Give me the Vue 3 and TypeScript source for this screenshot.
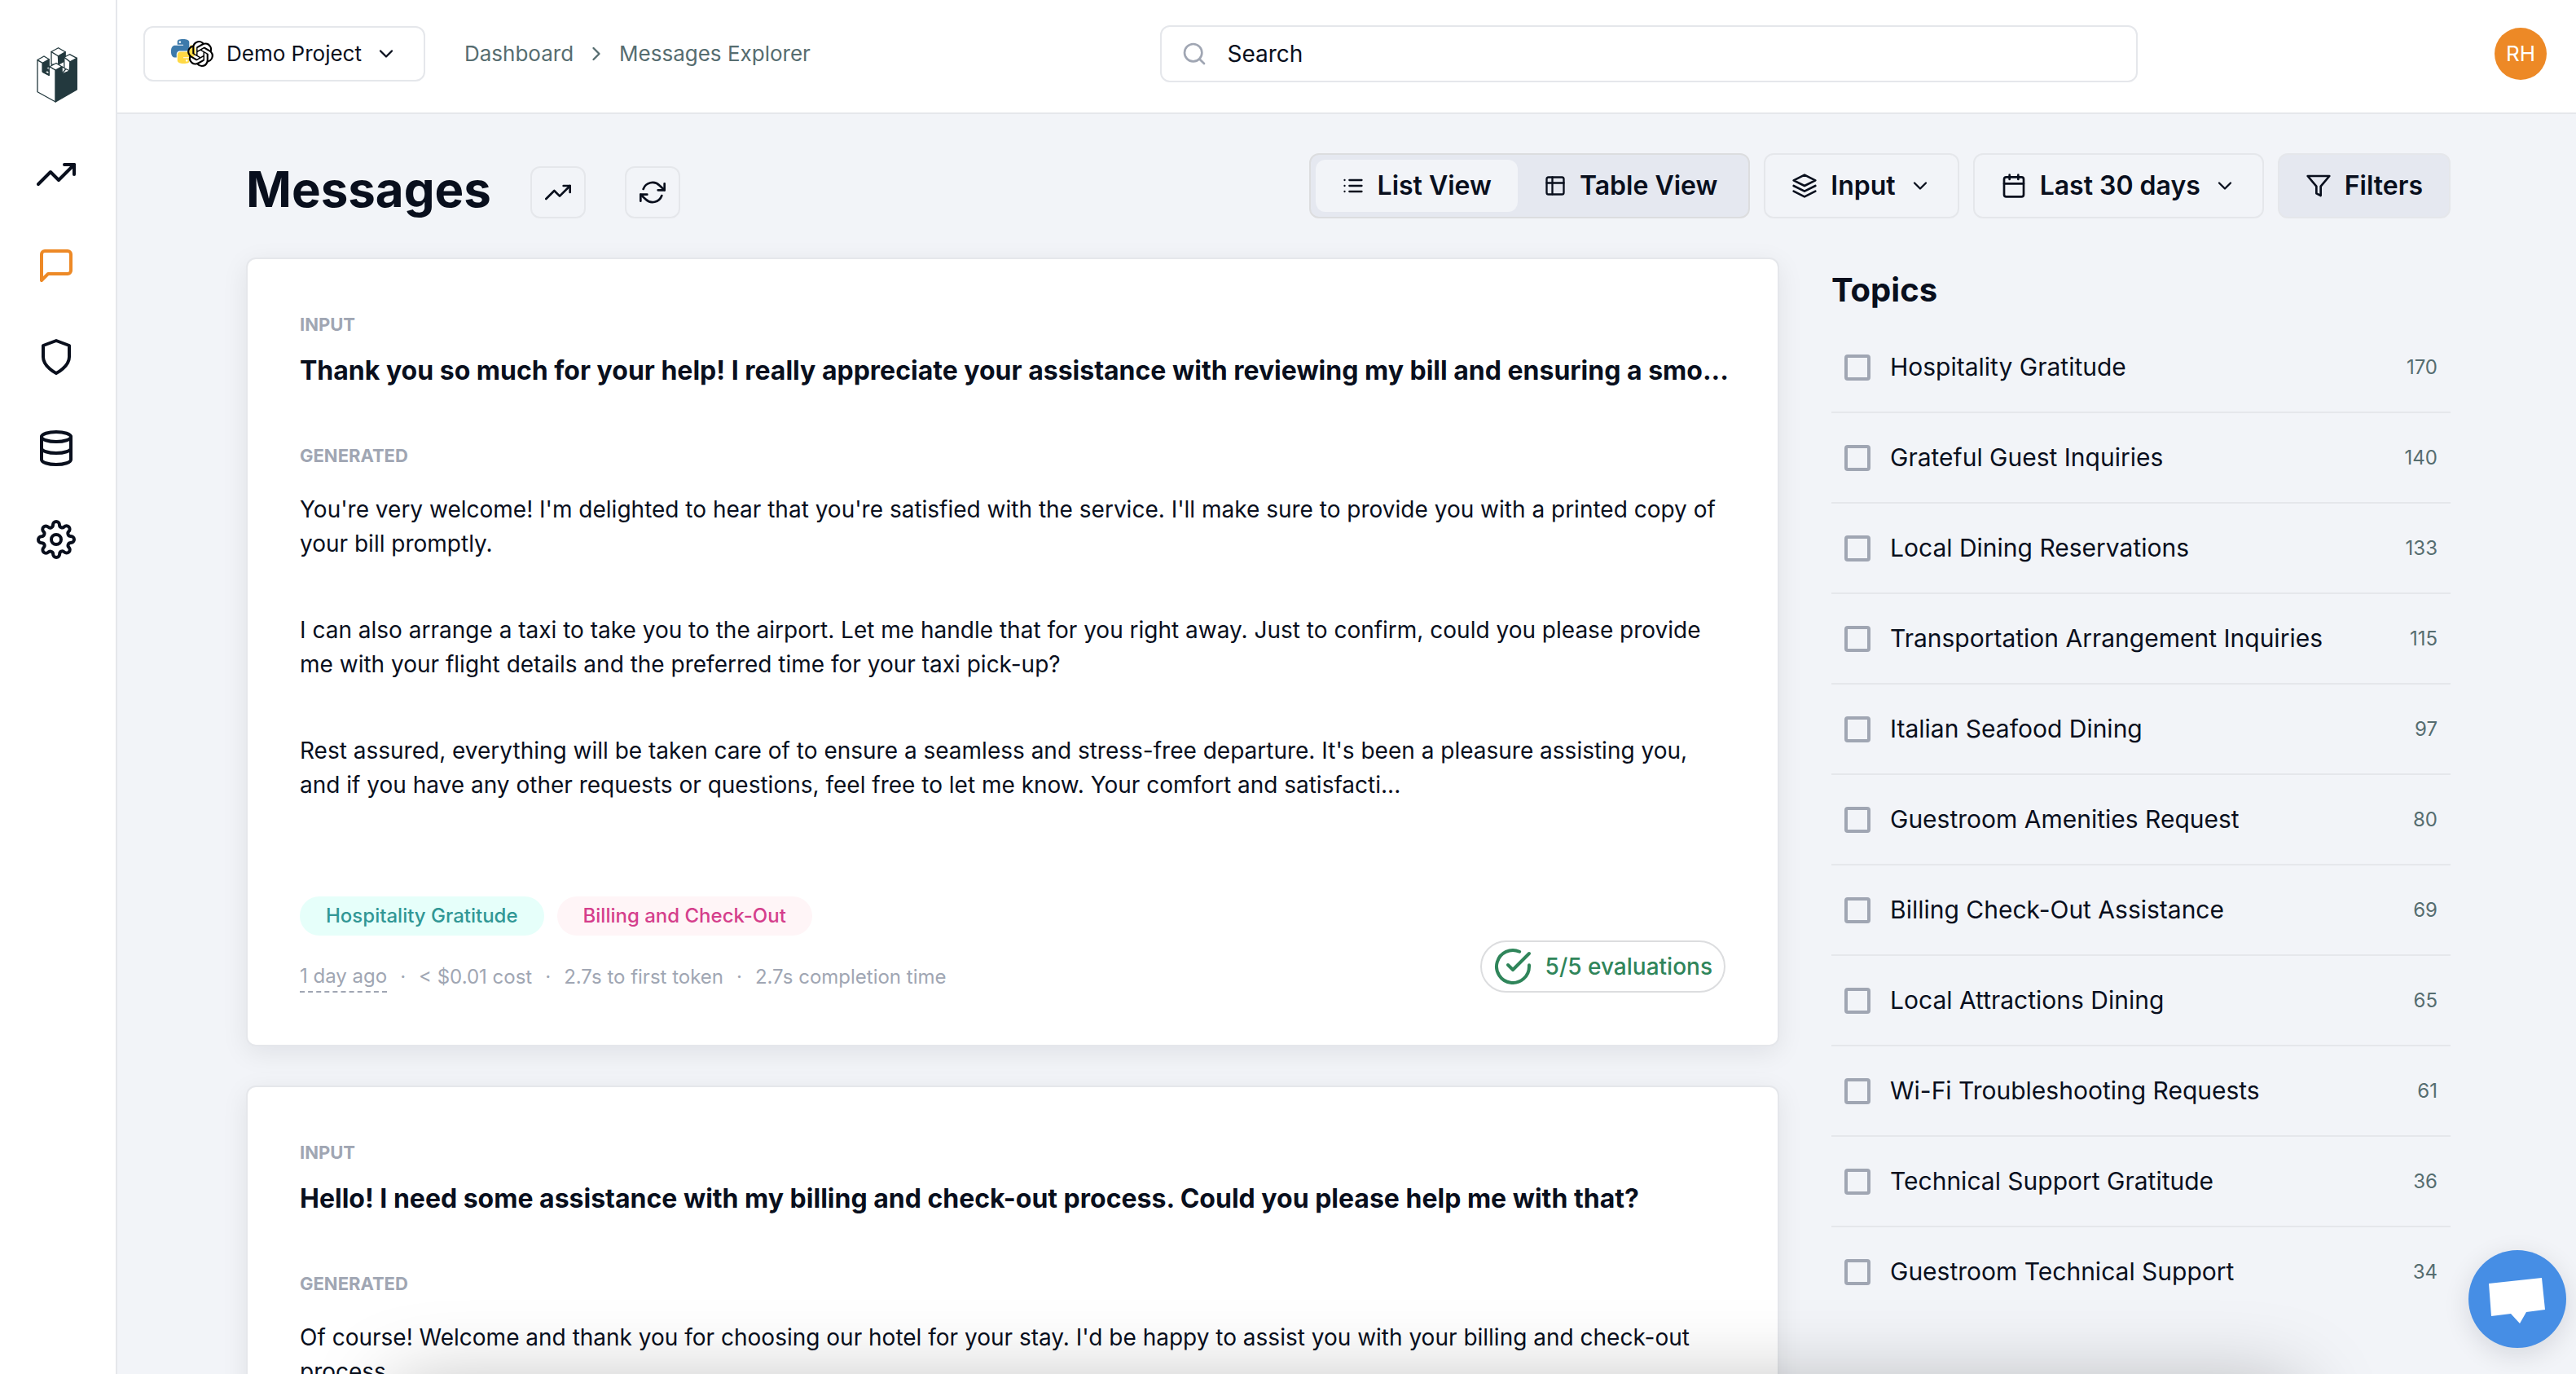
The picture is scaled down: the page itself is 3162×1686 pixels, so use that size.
<script setup lang="ts">
import { ref } from 'vue'

type Tone = 'teal' | 'pink'

interface Message {
  input: string
  paragraphs: string[]
  tags: { label: string; tone: Tone }[]
  age: string
  stats: string[]
  evaluations: string
}

const navigation = [
  { name: 'Analytics', paths: ['M23 6l-9.5 9.5-5-5L1 18', 'M17 6h6v6'] },
  { name: 'Messages', paths: ['M21 15a2 2 0 0 1-2 2H7l-4 4V5a2 2 0 0 1 2-2h14a2 2 0 0 1 2 2z'] },
  { name: 'Evaluations', paths: ['M12 22s8-4 8-10V5l-8-3-8 3v7c0 6 8 10 8 10z'] },
  {
    name: 'Datasets',
    paths: [
      'M21 5c0 1.66-4 3-9 3S3 6.66 3 5s4-3 9-3 9 1.34 9 3z',
      'M21 12c0 1.66-4 3-9 3s-9-1.34-9-3',
      'M3 5v14c0 1.66 4 3 9 3s9-1.34 9-3V5',
    ],
  },
  {
    name: 'Settings',
    paths: [
      'M15 12a3 3 0 1 1-6 0 3 3 0 0 1 6 0z',
      'M19.4 15a1.65 1.65 0 0 0 .33 1.82l.06.06a2 2 0 0 1 0 2.83 2 2 0 0 1-2.83 0l-.06-.06a1.65 1.65 0 0 0-1.82-.33 1.65 1.65 0 0 0-1 1.51V21a2 2 0 0 1-2 2 2 2 0 0 1-2-2v-.09A1.65 1.65 0 0 0 9 19.4a1.65 1.65 0 0 0-1.82.33l-.06.06a2 2 0 0 1-2.83 0 2 2 0 0 1 0-2.83l.06-.06a1.65 1.65 0 0 0 .33-1.82 1.65 1.65 0 0 0-1.51-1H3a2 2 0 0 1-2-2 2 2 0 0 1 2-2h.09A1.65 1.65 0 0 0 4.6 9a1.65 1.65 0 0 0-.33-1.82l-.06-.06a2 2 0 0 1 0-2.83 2 2 0 0 1 2.83 0l.06.06a1.65 1.65 0 0 0 1.82.33H9a1.65 1.65 0 0 0 1-1.51V3a2 2 0 0 1 2-2 2 2 0 0 1 2 2v.09a1.65 1.65 0 0 0 1 1.51 1.65 1.65 0 0 0 1.82-.33l.06-.06a2 2 0 0 1 2.83 0 2 2 0 0 1 0 2.83l-.06.06a1.65 1.65 0 0 0-.33 1.82V9a1.65 1.65 0 0 0 1.51 1H21a2 2 0 0 1 2 2 2 2 0 0 1-2 2h-.09a1.65 1.65 0 0 0-1.51 1z',
    ],
  },
]
const activePage = 'Messages'

const search = ref('')
const view = ref<'list' | 'table'>('list')
const selectedTopics = ref<string[]>([])

const messages: Message[] = [
  {
    input:
      'Thank you so much for your help! I really appreciate your assistance with reviewing my bill and ensuring a smo...',
    paragraphs: [
      "You're very welcome! I'm delighted to hear that you're satisfied with the service. I'll make sure to provide you with a printed copy of your bill promptly.",
      'I can also arrange a taxi to take you to the airport. Let me handle that for you right away. Just to confirm, could you please provide me with your flight details and the preferred time for your taxi pick-up?',
      "Rest assured, everything will be taken care of to ensure a seamless and stress-free departure. It's been a pleasure assisting you, and if you have any other requests or questions, feel free to let me know. Your comfort and satisfacti...",
    ],
    tags: [
      { label: 'Hospitality Gratitude', tone: 'teal' },
      { label: 'Billing and Check-Out', tone: 'pink' },
    ],
    age: '1 day ago',
    stats: ['< $0.01 cost', '2.7s to first token', '2.7s completion time'],
    evaluations: '5/5 evaluations',
  },
  {
    input: 'Hello! I need some assistance with my billing and check-out process. Could you please help me with that?',
    paragraphs: [
      "Of course! Welcome and thank you for choosing our hotel for your stay. I'd be happy to assist you with your billing and check-out process.",
    ],
    tags: [{ label: 'Billing and Check-Out', tone: 'pink' }],
    age: '1 day ago',
    stats: ['< $0.01 cost'],
    evaluations: '5/5 evaluations',
  },
]

const topics = [
  { name: 'Hospitality Gratitude', count: 170 },
  { name: 'Grateful Guest Inquiries', count: 140 },
  { name: 'Local Dining Reservations', count: 133 },
  { name: 'Transportation Arrangement Inquiries', count: 115 },
  { name: 'Italian Seafood Dining', count: 97 },
  { name: 'Guestroom Amenities Request', count: 80 },
  { name: 'Billing Check-Out Assistance', count: 69 },
  { name: 'Local Attractions Dining', count: 65 },
  { name: 'Wi-Fi Troubleshooting Requests', count: 61 },
  { name: 'Technical Support Gratitude', count: 36 },
  { name: 'Guestroom Technical Support', count: 34 },
]
</script>

<template>
  <div class="shell">
    <aside class="sidebar">
      <a href="#" class="logo" aria-label="Home">
        <svg viewBox="44 58 50 68" stroke="#23393e" stroke-width="1.3" stroke-linejoin="round" fill="#fff">
          <path d="M45 74V112.7L67.2 125V86L59.2 81.5V92.3L51.3 88.3V77z" />
          <path d="M62 63.5V79L71 80V68.7z" />
          <path d="M70.4 68.7L79.2 63.7V74.5L71 79z" fill="#23393e" />
          <path d="M62 63.5L70.6 58.7L79.2 63.7L70.4 68.7z" />
          <path d="M51.3 77L59.2 72.7V81L56 83.5L59.2 86.5V92.3L51.3 88z" fill="#23393e" />
          <path d="M54 88.5L57 86.5L59 88V91z" />
          <path d="M45 73.5L53 69L59.2 72.7L51.3 77.2z" />
          <path d="M74.8 81.7L80 84.5L75 90.5z" />
          <path d="M77.8 70V83.5L84.6 87L85 75.8z" />
          <path d="M67.2 86L74.8 81.7V91L84.2 87L85 75.8L93.3 71.3V110L67.2 125z" fill="#23393e" />
          <path d="M77.8 70.2L84.4 66.7L93.3 71.3L85 75.8z" />
          <path d="M60 81.8L68 77.5L74.8 81.7L67.2 86z" />
        </svg>
      </a>
      <nav class="nav" aria-label="Main">
        <a
          v-for="item in navigation"
          :key="item.name"
          href="#"
          :class="['nav-link', { active: item.name === activePage }]"
          :aria-label="item.name"
        >
          <svg class="icon icon-lg" viewBox="0 0 24 24">
            <path v-for="d in item.paths" :key="d" :d="d" />
          </svg>
        </a>
      </nav>
    </aside>

    <div class="page">
      <header class="header">
        <div class="header-start">
          <button type="button" class="project">
            <span class="project-logos">
              <svg class="python" viewBox="0 0 24 24">
                <path fill="#3d7aab" d="M14.25.18l.9.2.73.26.59.3.45.32.34.34.25.34.16.33.1.3.04.26.02.2-.01.13V8.5l-.05.63-.13.55-.21.46-.26.38-.3.31-.33.25-.35.19-.35.14-.33.1-.3.07-.26.04-.21.02H8.77l-.69.05-.59.14-.5.22-.41.27-.33.32-.27.35-.2.36-.15.37-.1.35-.07.32-.04.27-.02.21v3.06H3.17l-.21-.03-.28-.07-.32-.12-.35-.18-.36-.26-.36-.36-.35-.46-.32-.59-.28-.73-.21-.88-.14-1.05-.05-1.23.06-1.22.16-1.04.24-.87.32-.71.36-.57.4-.44.42-.33.42-.24.4-.16.36-.1.32-.05.24-.01h.16l.06.01h8.16v-.83H6.18l-.01-2.75-.02-.37.05-.34.11-.31.17-.28.25-.26.31-.23.38-.2.44-.18.51-.15.58-.12.64-.1.71-.06.77-.04.84-.02 1.27.05zm-6.3 1.98l-.23.33-.08.41.08.41.23.34.33.22.41.09.41-.09.33-.22.23-.34.08-.41-.08-.41-.23-.33-.33-.22-.41-.09-.41.09z" />
                <path fill="#ffd945" d="M21.1 6.11l.28.06.32.12.35.18.36.27.36.35.35.47.32.59.28.73.21.88.14 1.04.05 1.23-.06 1.23-.16 1.04-.24.86-.32.71-.36.57-.4.45-.42.33-.42.24-.4.16-.36.09-.32.05-.24.02-.16-.01h-8.22v.82h5.84l.01 2.76.02.36-.05.34-.11.31-.17.29-.25.25-.31.24-.38.2-.44.17-.51.15-.58.13-.64.09-.71.07-.77.04-.84.01-1.27-.04-1.07-.14-.9-.2-.73-.25-.59-.3-.45-.33-.34-.34-.25-.34-.16-.33-.1-.3-.04-.25-.02-.2.01-.13v-5.34l.05-.64.13-.54.21-.46.26-.38.3-.32.33-.24.35-.2.35-.14.33-.1.3-.06.26-.04.21-.02.13-.01h5.84l.69-.05.59-.14.5-.21.41-.28.33-.32.27-.35.2-.36.15-.36.1-.35.07-.32.04-.28.02-.21V6.07h2.09l.14.01zm-6.47 14.25l-.23.33-.08.41.08.41.23.33.33.23.41.08.41-.08.33-.23.23-.33.08-.41-.08-.41-.23-.33-.33-.23-.41-.08-.41.08z" />
              </svg>
              <svg class="openai" viewBox="0 0 24 24">
                <path d="M22.2819 9.8211a5.9847 5.9847 0 0 0-.5157-4.9108 6.0462 6.0462 0 0 0-6.5098-2.9A6.0651 6.0651 0 0 0 4.9807 4.1818a5.9847 5.9847 0 0 0-3.9977 2.9 6.0462 6.0462 0 0 0 .7427 7.0966 5.98 5.98 0 0 0 .511 4.9107 6.051 6.051 0 0 0 6.5146 2.9001A5.9847 5.9847 0 0 0 13.2599 24a6.0557 6.0557 0 0 0 5.7718-4.2058 5.9894 5.9894 0 0 0 3.9977-2.9001 6.0557 6.0557 0 0 0-.7475-7.0729zm-9.022 12.6081a4.4755 4.4755 0 0 1-2.8764-1.0408l.1419-.0804 4.7783-2.7582a.7948.7948 0 0 0 .3927-.6813v-6.7369l2.02 1.1686a.071.071 0 0 1 .038.052v5.5826a4.504 4.504 0 0 1-4.4945 4.4944zm-9.6607-4.1254a4.4708 4.4708 0 0 1-.5346-3.0137l.142.0852 4.783 2.7582a.7712.7712 0 0 0 .7806 0l5.8428-3.3685v2.3324a.0804.0804 0 0 1-.0332.0615L9.74 19.9502a4.4992 4.4992 0 0 1-6.1408-1.6464zM2.3408 7.8956a4.485 4.485 0 0 1 2.3655-1.9728V11.6a.7664.7664 0 0 0 .3879.6765l5.8144 3.3543-2.0201 1.1685a.0757.0757 0 0 1-.071 0l-4.8303-2.7865A4.504 4.504 0 0 1 2.3408 7.872zm16.5963 3.8558L13.1038 8.364 15.1192 7.2a.0757.0757 0 0 1 .071 0l4.8303 2.7913a4.4944 4.4944 0 0 1-.6765 8.1042v-5.6772a.79.79 0 0 0-.407-.667zm2.0107-3.0231l-.142-.0852-4.7735-2.7818a.7759.7759 0 0 0-.7854 0L9.409 9.2297V6.8974a.0662.0662 0 0 1 .0284-.0615l4.8303-2.7866a4.4992 4.4992 0 0 1 6.6802 4.66zM8.3065 12.863l-2.02-1.1638a.0804.0804 0 0 1-.038-.0567V6.0742a4.4992 4.4992 0 0 1 7.3757-3.4537l-.142.0805L8.704 5.459a.7948.7948 0 0 0-.3927.6813zm1.0976-2.3654l2.602-1.4998 2.6069 1.4998v2.9994l-2.5974 1.4997-2.6067-1.4997Z" />
              </svg>
            </span>
            Demo Project
            <svg class="icon icon-sm" viewBox="0 0 24 24"><path d="M6 9l6 6 6-6" /></svg>
          </button>
          <nav class="breadcrumbs" aria-label="Breadcrumb">
            <a href="#">Dashboard</a>
            <svg class="icon icon-sm" viewBox="0 0 24 24"><path d="M9 18l6-6-6-6" /></svg>
            <a href="#">Messages Explorer</a>
          </nav>
        </div>
        <label class="search">
          <svg class="icon icon-md" viewBox="0 0 24 24">
            <circle cx="11" cy="11" r="8" />
            <path d="M21 21l-4.35-4.35" />
          </svg>
          <input v-model="search" type="search" placeholder="Search" aria-label="Search" />
        </label>
        <button type="button" class="avatar">RH</button>
      </header>

      <main class="content">
        <div class="toolbar">
          <div class="title-group">
            <h1>Messages</h1>
            <button type="button" class="icon-button" aria-label="Show graph">
              <svg class="icon icon-md" viewBox="0 0 24 24">
                <path d="M23 6l-9.5 9.5-5-5L1 18" />
                <path d="M17 6h6v6" />
              </svg>
            </button>
            <button type="button" class="icon-button" aria-label="Refresh">
              <svg class="icon icon-md" viewBox="0 0 24 24">
                <path d="M23 4v6h-6M1 20v-6h6" />
                <path d="M3.51 9a9 9 0 0 1 14.85-3.36L23 10M1 14l4.64 4.36A9 9 0 0 0 20.49 15" />
              </svg>
            </button>
          </div>
          <div class="actions">
            <div class="view-switch" role="group" aria-label="View">
              <button type="button" :class="{ current: view === 'list' }" @click="view = 'list'">
                <svg class="icon icon-sm" viewBox="0 0 24 24">
                  <path d="M8 6h13M8 12h13M8 18h13M3 6h.01M3 12h.01M3 18h.01" />
                </svg>
                List View
              </button>
              <button type="button" :class="{ current: view === 'table' }" @click="view = 'table'">
                <svg class="icon icon-sm" viewBox="0 0 24 24">
                  <rect x="3" y="3" width="18" height="18" rx="2" />
                  <path d="M3 9h18M9 3v18" />
                </svg>
                Table View
              </button>
            </div>
            <button type="button" class="action">
              <svg class="icon icon-md" viewBox="0 0 24 24">
                <path d="M12 2L2 7l10 5 10-5-10-5zM2 17l10 5 10-5M2 12l10 5 10-5" />
              </svg>
              Input
              <svg class="icon icon-sm" viewBox="0 0 24 24"><path d="M6 9l6 6 6-6" /></svg>
            </button>
            <button type="button" class="action">
              <svg class="icon icon-md" viewBox="0 0 24 24">
                <rect x="3" y="4" width="18" height="18" rx="2" />
                <path d="M16 2v4M8 2v4M3 10h18" />
              </svg>
              Last 30 days
              <svg class="icon icon-sm" viewBox="0 0 24 24"><path d="M6 9l6 6 6-6" /></svg>
            </button>
            <button type="button" class="action filled">
              <svg class="icon icon-md" viewBox="0 0 24 24">
                <path d="M22 3H2l8 9.46V19l4 2v-8.54L22 3z" />
              </svg>
              Filters
            </button>
          </div>
        </div>

        <div class="columns">
          <section class="messages" aria-label="Messages">
            <article v-for="message in messages" :key="message.input" class="card">
              <div class="label">INPUT</div>
              <h2 class="input-text">{{ message.input }}</h2>
              <div class="label generated">GENERATED</div>
              <div class="generated-text">
                <p v-for="paragraph in message.paragraphs" :key="paragraph">{{ paragraph }}</p>
              </div>
              <footer class="card-footer">
                <div class="details">
                  <div class="tags">
                    <span v-for="tag in message.tags" :key="tag.label" :class="['tag', tag.tone]">{{ tag.label }}</span>
                  </div>
                  <div class="stats">
                    <span class="age">{{ message.age }}</span>
                    <template v-for="stat in message.stats" :key="stat">
                      <span>·</span>
                      <span>{{ stat }}</span>
                    </template>
                  </div>
                </div>
                <button type="button" class="evaluations">
                  <svg class="icon icon-lg" viewBox="0 0 24 24">
                    <path d="M22 11.08V12a10 10 0 1 1-5.93-9.14" />
                    <path d="M22 4L12 14.01l-3-3" />
                  </svg>
                  {{ message.evaluations }}
                </button>
              </footer>
            </article>
          </section>

          <section class="topics" aria-labelledby="topics-heading">
            <h2 id="topics-heading">Topics</h2>
            <ul>
              <li v-for="topic in topics" :key="topic.name">
                <label>
                  <input v-model="selectedTopics" type="checkbox" :value="topic.name" />
                  {{ topic.name }}
                </label>
                <span class="count">{{ topic.count }}</span>
              </li>
            </ul>
          </section>
        </div>
      </main>
    </div>

    <div class="drawer" aria-hidden="true"></div>

    <button type="button" class="chat" aria-label="Open chat">
      <svg viewBox="0 0 120 120"><path d="M25 41L90 34L94 73L71 76L63 90L52 78L28 81z" /></svg>
    </button>
  </div>
</template>

<style>
body {
  margin: 0;
  background: #f2f4f8;
}
</style>

<style scoped>
.shell,
.shell * {
  box-sizing: border-box;
}

.shell {
  display: flex;
  height: 100vh;
  overflow: hidden;
  color: #090f1d;
  font-family: Inter, 'Liberation Sans', sans-serif;
  font-size: 28px;
  line-height: 42px;
}

button,
input {
  font: inherit;
  color: inherit;
}

button {
  display: flex;
  align-items: center;
  padding: 0;
  border: 0;
  background: none;
  cursor: pointer;
  white-space: nowrap;
}

a {
  color: inherit;
  text-decoration: none;
}

h1,
h2,
p,
ul {
  margin: 0;
  padding: 0;
}

.icon {
  flex: none;
  fill: none;
  stroke: currentColor;
  stroke-width: 2;
  stroke-linecap: round;
  stroke-linejoin: round;
}

.icon-sm {
  width: 28px;
  height: 28px;
}

.icon-md {
  width: 32px;
  height: 32px;
}

.icon-lg {
  width: 48px;
  height: 48px;
}

.sidebar {
  flex: none;
  width: 144px;
  padding: 58px 45px;
  border-right: 2px solid #e5e7eb;
  background: #fff;
}

.logo,
.logo svg {
  display: block;
  width: 50px;
  height: 68px;
}

.nav {
  display: flex;
  flex-direction: column;
  gap: 64px;
  margin-top: 64px;
}

.nav-link {
  display: flex;
}

.nav-link.active {
  color: #ed8926;
}

.page {
  flex: 1;
  min-width: 0;
}

.header {
  display: flex;
  align-items: center;
  justify-content: space-between;
  height: 140px;
  padding: 0 36px 6px 32px;
  border-bottom: 2px solid #e5e7eb;
  background: #fff;
}

.header-start {
  display: flex;
  align-items: center;
  gap: 48px;
}

.project {
  gap: 16px;
  height: 68px;
  padding: 0 32px;
  border: 2px solid #e5e7eb;
  border-radius: 12px;
  font-size: 26px;
}

.project-logos {
  display: flex;
  align-items: center;
}

.python {
  width: 30px;
  height: 30px;
  margin: 0 -10px 6px 0;
}

.openai {
  width: 32px;
  height: 32px;
}

.breadcrumbs {
  display: flex;
  align-items: center;
  gap: 14px;
  color: #566d70;
  font-size: 26px;
}

.search {
  display: flex;
  align-items: center;
  gap: 24px;
  flex: 0 1 1200px;
  height: 70px;
  margin-right: 8px;
  padding: 0 24px;
  border: 2px solid #e5e7eb;
  border-radius: 12px;
}

.search .icon {
  color: #a0a6b3;
}

.search input {
  flex: 1;
  min-width: 0;
  padding: 0;
  border: 0;
  outline: 0;
  background: none;
}

.search input::placeholder {
  color: #090f1d;
  opacity: 1;
}

.avatar {
  justify-content: center;
  width: 64px;
  height: 64px;
  border-radius: 50%;
  background: #ed8926;
  color: #fff;
  font-size: 26px;
}

.content {
  max-width: 2710px;
  margin: 0 auto;
  padding: 48px 0 48px 4px;
}

.toolbar {
  display: flex;
  align-items: flex-end;
  justify-content: space-between;
  margin-bottom: 48px;
}

.title-group {
  display: flex;
  align-items: flex-end;
  gap: 48px;
}

h1 {
  font-size: 60px;
  font-weight: 700;
  line-height: 72px;
}

.icon-button {
  justify-content: center;
  width: 68px;
  height: 64px;
  border: 2px solid #e5e7eb;
  border-radius: 12px;
}

.actions {
  display: flex;
  gap: 17px;
  font-size: 32px;
  font-weight: 600;
}

.view-switch {
  display: flex;
  height: 80px;
  padding: 6px;
  border: 2px solid #dcdddf;
  border-radius: 12px;
  background: #e5e8f0;
}

.view-switch button {
  gap: 16px;
  padding: 0 32px;
  border-radius: 12px;
}

.view-switch .current {
  background: #f2f4f8;
}

.action {
  gap: 16px;
  height: 80px;
  padding: 0 32px;
  border: 2px solid #e5e7eb;
  border-radius: 12px;
}

.action.filled {
  background: #e5e8f0;
}

.columns {
  display: flex;
  align-items: flex-start;
  gap: 64px;
}

.messages {
  display: flex;
  flex: 1;
  flex-direction: column;
  gap: 48px;
  min-width: 0;
}

.card {
  padding: 64px;
  border: 2px solid #e5e7eb;
  border-radius: 12px;
  background: #fff;
  box-shadow: 0 8px 32px rgba(9, 15, 29, 0.08);
}

.label {
  color: #a0a6b3;
  font-size: 22px;
  font-weight: 700;
  line-height: 33px;
}

.input-text {
  margin: 16px 0 64px;
  font-size: 32px;
  font-weight: 700;
  line-height: 48px;
  white-space: nowrap;
}

.generated {
  margin-bottom: 28px;
}

.generated-text {
  display: flex;
  flex-direction: column;
  gap: 64px;
}

.card-footer {
  display: flex;
  align-items: flex-end;
  justify-content: space-between;
  margin-top: 116px;
}

.tags {
  display: flex;
  gap: 16px;
  margin-bottom: 32px;
}

.tag {
  padding: 0 32px;
  border-radius: 24px;
  font-size: 24px;
  font-weight: 500;
  line-height: 48px;
}

.tag.teal {
  background: #e6fffa;
  color: #319795;
}

.tag.pink {
  background: #fff5f7;
  color: #d53f8c;
}

.stats {
  display: flex;
  align-items: center;
  gap: 16px;
  color: #a0a6b3;
  font-size: 24px;
  line-height: 36px;
}

.age {
  border-bottom: 2px dashed #a0a6b3;
}

.evaluations {
  gap: 16px;
  height: 64px;
  padding: 0 14px;
  border: 2px solid #dcdddf;
  border-radius: 32px;
  color: #2f855a;
  font-weight: 500;
}

.topics {
  flex: 0 0 760px;
  padding-top: 16px;
}

.topics h2 {
  margin-bottom: 16px;
  font-size: 40px;
  font-weight: 700;
  line-height: 48px;
}

.topics li {
  display: flex;
  align-items: center;
  justify-content: space-between;
  padding: 32px 16px;
  border-bottom: 2px solid #e5e7eb;
  font-size: 30px;
  line-height: 45px;
}

.topics li:last-child {
  border-bottom: 0;
}

.topics label {
  display: flex;
  align-items: center;
  gap: 24px;
}

.topics input {
  width: 32px;
  height: 32px;
  margin: 0;
  border: 4px solid #a0a6b3;
  border-radius: 4px;
  appearance: none;
}

.topics input:checked {
  background: #a0a6b3;
}

.count {
  color: #566d70;
  font-size: 24px;
}

.drawer {
  position: fixed;
  right: 340px;
  bottom: -314px;
  left: 480px;
  height: 300px;
  border-radius: 20px;
  box-shadow: 0 0 100px rgba(0, 0, 0, 0.27);
  pointer-events: none;
}

.chat {
  position: fixed;
  right: 12px;
  bottom: 32px;
  width: 120px;
  height: 120px;
  border-radius: 50%;
  background: #468ee5;
  box-shadow: 0 8px 32px rgba(9, 15, 29, 0.12);
}

.chat svg {
  width: 120px;
  height: 120px;
  fill: #fff;
}
</style>
